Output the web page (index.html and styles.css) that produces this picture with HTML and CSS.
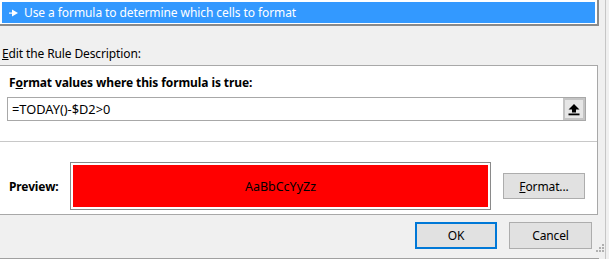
FILE: index.html
```html
<!DOCTYPE html>
<html>
<head>
<meta charset="utf-8">
<link rel="stylesheet" href="styles.css">
</head>
<body>
<div class="frame">
  <div class="content">
    <div class="listbox">
      <div class="rule-selected">
        <svg class="arrow" width="9" height="8" viewBox="0 0 9 8"><rect x="0" y="3.5" width="4" height="1.2" fill="#fff"/><polygon points="3,0.5 9,4 3,7.5" fill="#fff"/></svg>
        <span>Use a formula to determine which cells to format</span>
      </div>
    </div>
    <div class="section-label"><u>E</u>dit the Rule Description:</div>
    <div class="panel">
      <div class="heading">F<u>o</u>rmat values where this formula is true:</div>
      <div class="formula">
        <span class="formula-text">=TODAY()-$D2&gt;0</span>
        <span class="collapse-btn">
          <svg width="12" height="13" viewBox="0 0 12 13"><polygon points="6,1 11.5,6.5 8,6.5 8,9.5 4,9.5 4,6.5 0.5,6.5" fill="#000"/><rect x="0.5" y="10.5" width="11" height="1.8" fill="#000"/></svg>
        </span>
      </div>
      <div class="separator"></div>
      <div class="preview-row">
        <div class="preview-label">Preview:</div>
        <div class="preview-box"><div class="preview-fill">AaBbCcYyZz</div></div>
        <div class="btn format-btn"><u>F</u>ormat...</div>
      </div>
    </div>
    <div class="footer">
      <div class="btn ok-btn">OK</div>
      <div class="btn cancel-btn">Cancel</div>
      <svg class="grip" width="9" height="9" viewBox="0 0 9 9"><g fill="#b0b0b0"><rect x="6" y="0" width="2" height="2"/><rect x="3" y="3" width="2" height="2"/><rect x="6" y="3" width="2" height="2"/><rect x="0" y="6" width="2" height="2"/><rect x="3" y="6" width="2" height="2"/><rect x="6" y="6" width="2" height="2"/></g></svg>
    </div>
  </div>
  <div class="edge"></div>
</div>
</body>
</html>
```
FILE: styles.css
```css
html, body {
  margin: 0;
  padding: 0;
}
body {
  width: 609px;
  height: 259px;
  overflow: hidden;
  background: #f0f0f0;
  font-family: "Noto Sans", "Open Sans", sans-serif;
  font-size: 12px;
  letter-spacing: -0.12px;
  color: #000;
}
.frame {
  display: flex;
  height: 259px;
}
.content {
  width: 599px;
  display: flex;
  flex-direction: column;
}
.edge {
  width: 10px;
  display: flex;
  padding-left: 6px;
  box-sizing: border-box;
}
.edge::before {
  content: "";
  display: block;
  width: 1px;
  background: #c6c6c6;
}
.listbox {
  box-sizing: border-box;
  width: 599px;
  height: 26px;
  background: #fff;
  border-right: 2px solid #8a8a8a;
  border-bottom: 2px solid #8a8a8a;
  padding: 2px 0 1px 2px;
}
.rule-selected {
  height: 21px;
  width: 593px;
  background: #3399ff;
  color: #fff;
  display: flex;
  align-items: center;
  letter-spacing: -0.08px;
}
.arrow {
  margin-left: 7px;
  margin-right: 6px;
}
.section-label {
  padding-left: 2px;
  margin-top: 20px;
  height: 19px;
  line-height: 16px;
}
.panel {
  box-sizing: border-box;
  width: 598px;
  height: 150px;
  background: #fff;
  border: 1px solid #a8a8a8;
  border-left: none;
  display: flex;
  flex-direction: column;
}
.heading {
  font-weight: bold;
  padding-left: 9px;
  margin-top: 9px;
  line-height: 16px;
  letter-spacing: -0.1px;
}
.formula {
  box-sizing: border-box;
  margin-top: 6px;
  margin-left: 7px;
  width: 579px;
  height: 24px;
  border: 1px solid #a8a8a8;
  display: flex;
  align-items: center;
}
.formula-text {
  flex: 1;
  padding-left: 4px;
  font-size: 12.8px;
  letter-spacing: 0;
}
.collapse-btn {
  box-sizing: border-box;
  width: 22px;
  height: 22px;
  background: #e6e6e6;
  border: 2px solid #c4c4c4;
  display: flex;
  align-items: center;
  justify-content: center;
}
.separator {
  margin-top: 20px;
  height: 1px;
  background: #c8c8c8;
}
.preview-row {
  display: flex;
  align-items: center;
  margin-top: 20px;
}
.preview-label {
  font-weight: bold;
  width: 61px;
  padding-left: 9px;
}
.preview-box {
  box-sizing: border-box;
  width: 421px;
  height: 48px;
  border: 1px solid #8a8a8a;
  padding: 2px;
  background: #fff;
}
.preview-fill {
  height: 100%;
  background: #ff0000;
  display: flex;
  align-items: center;
  justify-content: center;
  font-size: 12.5px;
  letter-spacing: 0;
}
.btn {
  box-sizing: border-box;
  background: #e1e1e1;
  border: 1px solid #adadad;
  display: flex;
  align-items: center;
  justify-content: center;
}
.format-btn {
  width: 82px;
  height: 26px;
  margin-left: 12px;
}
.footer {
  display: flex;
  align-items: flex-start;
  padding-top: 7px;
  padding-left: 415px;
  position: relative;
  flex: 1;
  border-bottom: 1px solid #a0a0a0;
}
.ok-btn {
  width: 82px;
  height: 27px;
  border: 2px solid #0078d7;
}
.cancel-btn {
  width: 83px;
  height: 27px;
  margin-left: 12px;
}
.grip {
  position: absolute;
  right: -6px;
  bottom: 5px;
}
```
